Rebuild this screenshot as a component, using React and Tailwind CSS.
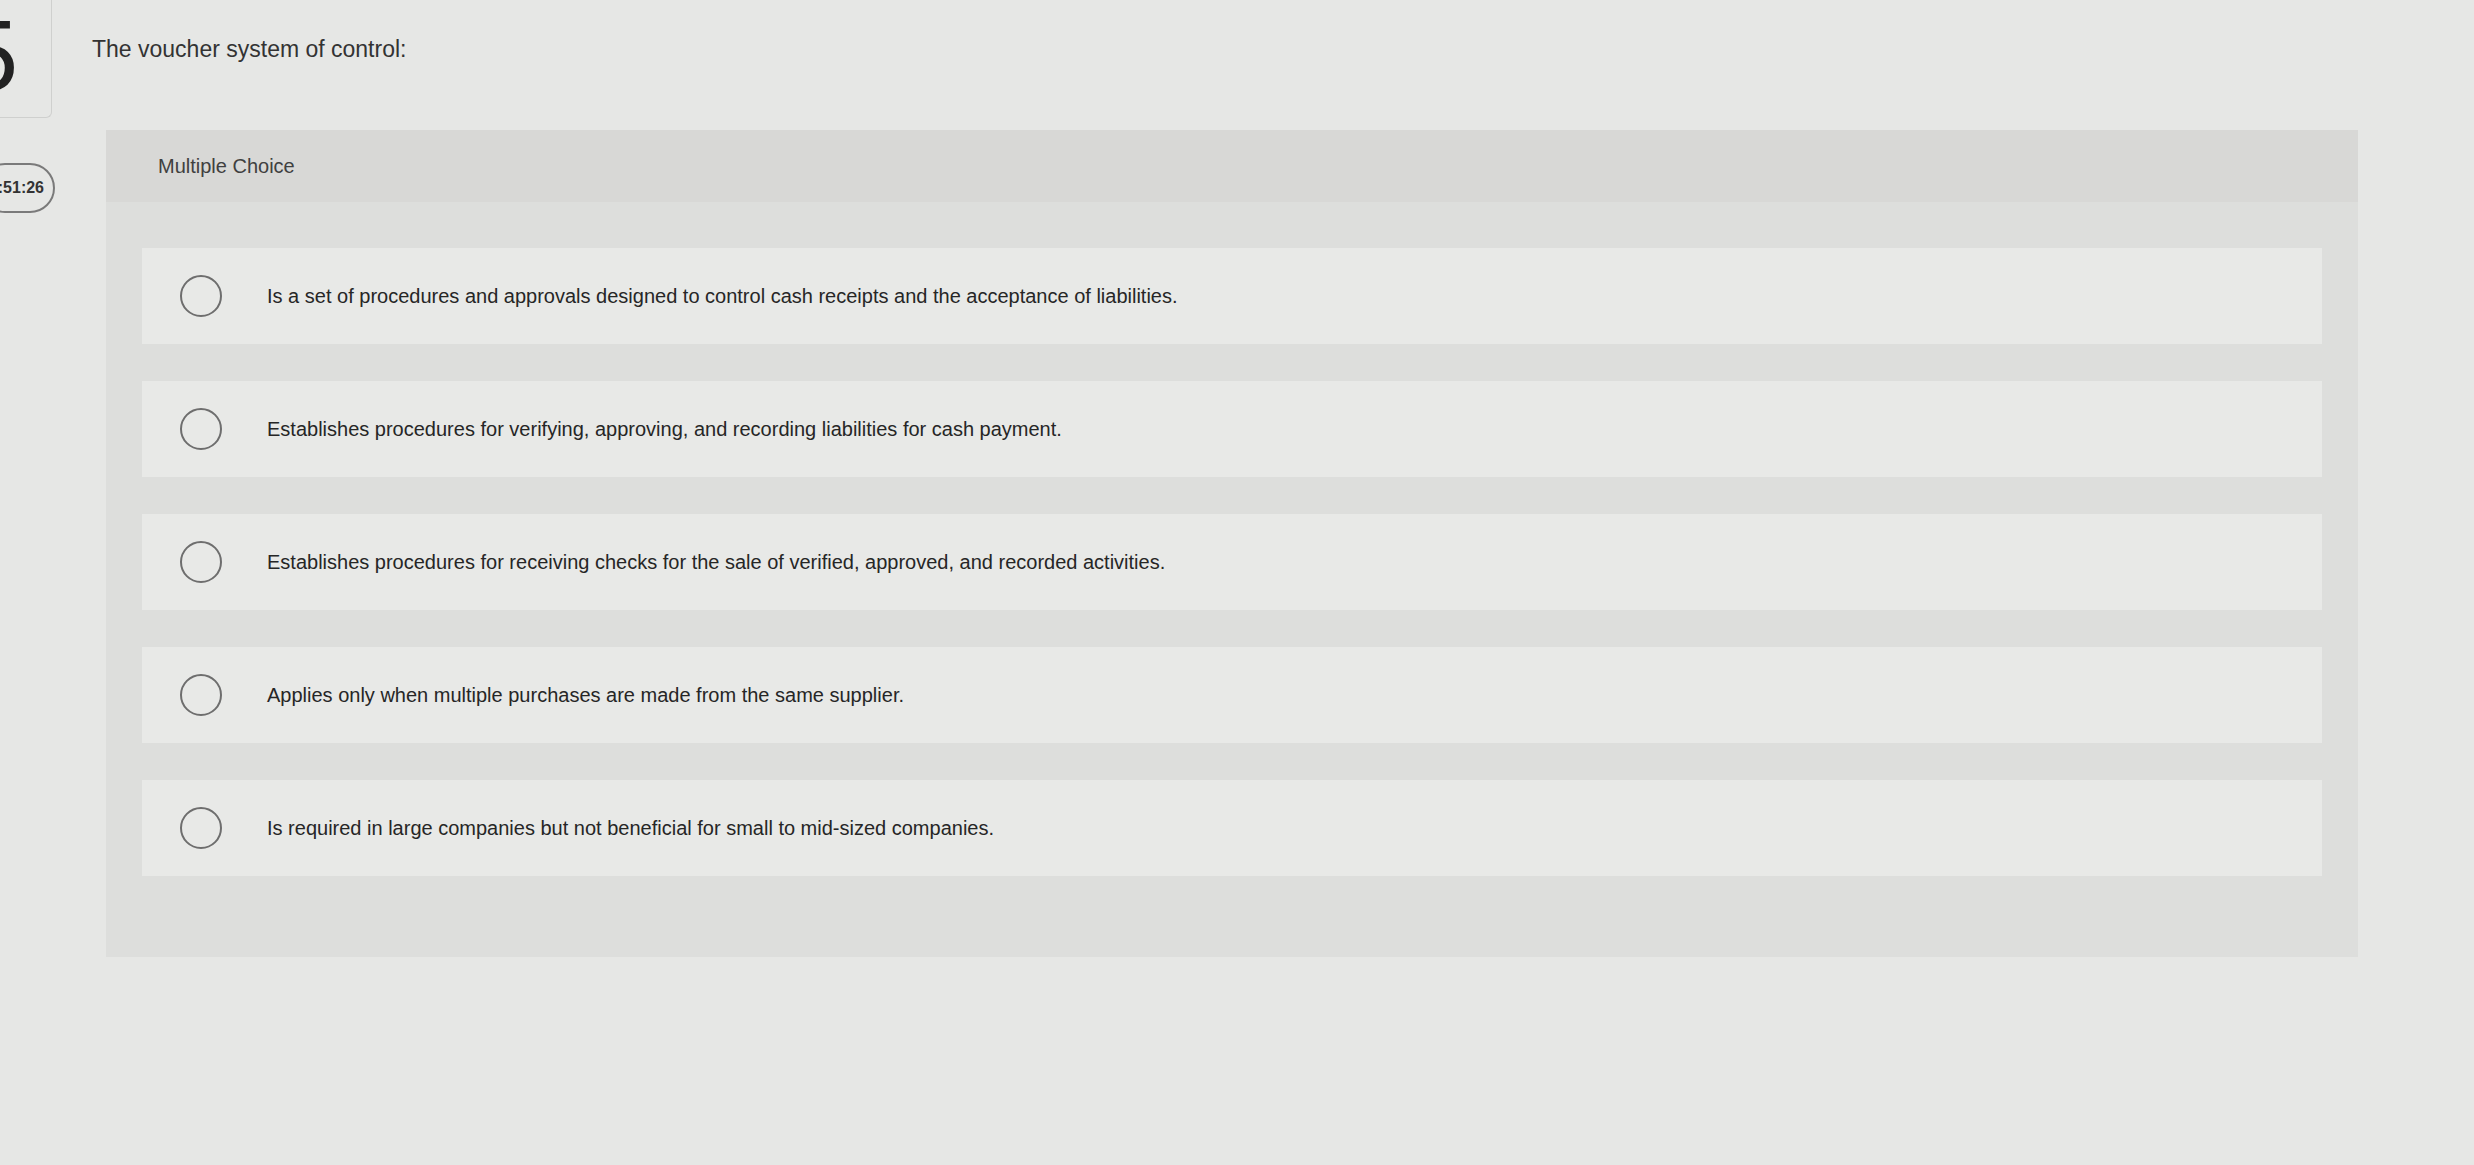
import React from "react";

const options = [
  "Is a set of procedures and approvals designed to control cash receipts and the acceptance of liabilities.",
  "Establishes procedures for verifying, approving, and recording liabilities for cash payment.",
  "Establishes procedures for receiving checks for the sale of verified, approved, and recorded activities.",
  "Applies only when multiple purchases are made from the same supplier.",
  "Is required in large companies but not beneficial for small to mid-sized companies.",
];

const App = () => {
  return (
    <div className="flex min-h-[1165px] w-full bg-[#e6e7e5] font-['Liberation_Sans',Arial,sans-serif] text-[#333]">
      {/* left rail: question number + timer */}
      <div className="flex w-[56px] shrink-0 flex-col">
        <div className="flex h-[118px] w-[52px] items-start justify-end overflow-hidden rounded-br-[6px] border-r border-b border-[#cfd0ce] pt-[5px] pr-[33px]">
          <span className="text-[100px] leading-none text-[#222]">5</span>
        </div>
        <div className="mt-[45px] -ml-[20px] flex h-[50px] w-[75px] items-center justify-end rounded-full border-2 border-[#7a7a7a] pr-[9px]">
          <span className="text-[16px] font-bold text-[#333]">:51:26</span>
        </div>
      </div>

      {/* main column */}
      <div className="flex flex-col pt-[35px] pl-[36px]">
        <h1 className="text-[23px] leading-[28px] text-[#333]">
          The voucher system of control:
        </h1>

        <div className="mt-[67px] ml-[14px] w-[2252px] bg-[#dddedc]">
          <div className="flex h-[72px] items-center bg-[#d8d8d6] pl-[52px]">
            <span className="text-[20px] text-[#404040]">Multiple Choice</span>
          </div>

          <div className="flex flex-col gap-[37px] pt-[46px] pb-[81px]">
            {options.map((text, i) => (
              <div
                key={i}
                className="mx-[36px] flex h-[96px] items-center gap-[45px] bg-[#e8e9e7] pl-[38px]"
              >
                <span className="h-[42px] w-[42px] shrink-0 rounded-full border-2 border-[#6e6e6e]" />
                <span className="text-[20px] text-[#262626]">{text}</span>
              </div>
            ))}
          </div>
        </div>
      </div>
    </div>
  );
};

export default App;
